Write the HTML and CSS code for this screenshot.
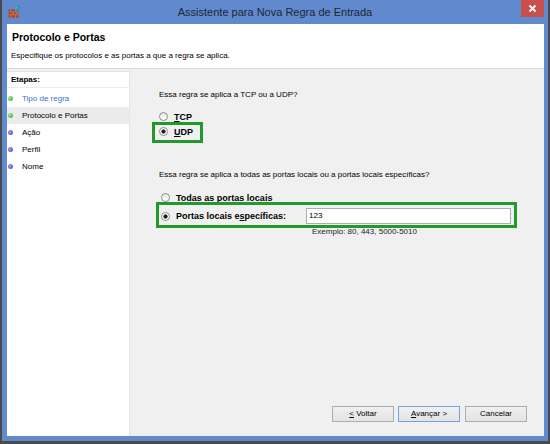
FILE: index.html
```html
<!DOCTYPE html>
<html lang="pt-BR">
  <head>
    <meta charset="UTF-8" />
    <title>Assistente para Nova Regra de Entrada</title>
    <link rel="stylesheet" href="styles.css">
  </head>
  <body>
    <div class="frame">
      <div class="titlebar">
        <svg class="app-icon" width="13" height="13" viewBox="0 0 13 13">
          <rect x="0.5" y="4.5" width="10" height="8" fill="#a4432b" />
          <path d="M0.5 7h10M0.5 9.7h10M3 4.5v2.5M7.5 4.5v2.5M5 7v2.7M9 7v2.7M3 9.7v2.8M7.5 9.7v2.8" stroke="#d9866a" stroke-width="0.7" fill="none" />
          <circle cx="9.3" cy="3.6" r="3" fill="#2f8fd8" />
          <path d="M7.4 2.4c1-.9 2-.6 2.6.2-.4.7-1.3.6-1.6 1.5-.5.4-1 .2-1.2-.4z" fill="#5cc24a" />
        </svg>
        <div class="title">Assistente para Nova Regra de Entrada</div>
        <div class="close">
          <svg width="9" height="9" viewBox="0 0 9 9">
            <path d="M1.5 1.5l6 6M7.5 1.5l-6 6" stroke="#fff" stroke-width="1.8" />
          </svg>
        </div>
      </div>

      <div class="content">
        <div class="header">
          <h1>Protocolo e Portas</h1>
          <p>Especifique os protocolos e as portas a que a regra se aplica.</p>
        </div>

        <div class="body">
          <div class="steps">
            <div class="steps-title">Etapas:</div>
            <ul class="step-list">
              <li class="step done"><span class="dot green"></span>Tipo de regra</li>
              <li class="step current"><span class="dot green"></span>Protocolo e Portas</li>
              <li class="step"><span class="dot"></span>Ação</li>
              <li class="step"><span class="dot"></span>Perfil</li>
              <li class="step"><span class="dot"></span>Nome</li>
            </ul>
          </div>

          <div class="main">
            <p class="question">Essa regra se aplica a TCP ou a UDP?</p>
            <div class="choices">
              <div class="choice"><span class="radio"></span><b><u>T</u>CP</b></div>
              <div class="choice marked udp"><span class="radio on"></span><b><u>U</u>DP</b></div>
            </div>

            <p class="question q2">Essa regra se aplica a todas as portas locais ou a portas locais específicas?</p>
            <div class="choices ports">
              <div class="choice"><span class="radio"></span><b>T<u>o</u>das as portas locais</b></div>
              <div class="choice marked specific">
                <span class="radio on"></span>
                <b class="port-label">Portas locais e<u>s</u>pecíficas:</b>
                <div class="port-input">123</div>
              </div>
              <div class="hint">Exemplo: 80, 443, 5000-5010</div>
            </div>

            <div class="buttons">
              <div class="btn"><u>&lt;</u> Voltar</div>
              <div class="btn default"><u>A</u>vançar &gt;</div>
              <div class="btn cancel">Cancelar</div>
            </div>
          </div>
        </div>
      </div>
    </div>
  </body>
</html>
```

FILE: styles.css
```css
* {
  margin: 0;
  padding: 0;
  box-sizing: border-box;
  font-family: "Liberation Sans", Arial, sans-serif;
}

body {
  width: 550px;
  height: 444px;
  background-color: #4a4a4a;
  padding: 0 2px 3px 2px;
  overflow: hidden;
}

.frame {
  height: 441px;
  background-color: #6189ce;
  display: flex;
  flex-direction: column;
}

.titlebar {
  height: 24px;
  display: flex;
  align-items: flex-start;
  padding: 0 4px 0 6px;
}

.app-icon {
  margin-top: 5px;
  flex-shrink: 0;
}

.title {
  flex: 1;
  text-align: center;
  font-size: 11px;
  line-height: 25px;
  color: #1f2630;
  padding-left: 8px;
}

.close {
  width: 23px;
  height: 17px;
  background-color: #c9504d;
  display: flex;
  align-items: center;
  justify-content: center;
}

.content {
  flex: 1;
  margin: 0 4px 5px 5px;
  background-color: #ffffff;
  display: flex;
  flex-direction: column;
}

.header {
  height: 45px;
  padding: 6px 0 0 4px;
  border-bottom: 1px solid #dadada;
}

.header h1 {
  font-size: 10.5px;
  line-height: 14px;
  padding-left: 1px;
  color: #000;
}

.header p {
  font-size: 8px;
  line-height: 10px;
  margin-top: 7px;
  color: #000;
}

.body {
  flex: 1;
  display: flex;
  background-color: #f0f0f0;
}

.steps {
  width: 123px;
  margin-top: 2px;
  background-color: #ffffff;
  border: 1px solid #e3e3e3;
  border-left: none;
  border-bottom: none;
}

.steps-title {
  height: 16px;
  line-height: 16px;
  padding-left: 4px;
  font-size: 8px;
  font-weight: bold;
  border-bottom: 1px solid #ededed;
}

.step-list {
  list-style: none;
  padding-top: 2px;
}

.step {
  height: 17px;
  display: flex;
  align-items: center;
  gap: 9px;
  padding-left: 1px;
  font-size: 8px;
  color: #000;
}

.step.done {
  color: #3b6fd0;
}

.step.current {
  background-color: #ebebeb;
}

.dot {
  width: 5px;
  height: 5px;
  border-radius: 50%;
  background: radial-gradient(circle at 35% 35%, #9c9cf0, #4646c4);
}

.dot.green {
  background: radial-gradient(circle at 35% 35%, #a6e58f, #3aa630);
}

.main {
  flex: 1;
  display: flex;
  flex-direction: column;
  padding: 21px 0 14px 29px;
}

.question {
  font-size: 8px;
  line-height: 10px;
  color: #000;
}

.q2 {
  margin-top: 31px;
}

.choices {
  margin-top: 9px;
}

.choices.ports {
  margin-top: 10px;
  padding-left: 2px;
}

.choice {
  height: 15px;
  display: flex;
  align-items: center;
  gap: 6px;
  font-size: 9px;
  color: #000;
}

.radio {
  width: 9px;
  height: 9px;
  border-radius: 50%;
  border: 1px solid #8e8e8e;
  background: linear-gradient(#e6e6e6, #ffffff);
  flex-shrink: 0;
}

.radio.on {
  background: radial-gradient(circle, #1e1e1e 0 1.8px, #ffffff 2.4px);
}

.marked {
  position: relative;
}

.marked::after {
  content: "";
  position: absolute;
  box-sizing: border-box;
  border: 3px solid #23992b;
}

.udp::after {
  left: -7px;
  top: -2px;
  width: 51px;
  height: 21px;
}

.specific {
  height: 16px;
  margin-top: 3px;
}

.specific::after {
  left: -5px;
  top: -6px;
  width: 361px;
  height: 26px;
}

.port-label {
  width: 124px;
  flex-shrink: 0;
}

.port-input {
  width: 205px;
  height: 16px;
  border: 1px solid #abadb3;
  background-color: #ffffff;
  font-size: 8px;
  line-height: 14px;
  padding-left: 2px;
  color: #000;
}

.hint {
  margin: 3px 0 0 151px;
  font-size: 8px;
  line-height: 10px;
  color: #222;
}

.buttons {
  margin-top: auto;
  display: flex;
  justify-content: flex-end;
  padding-right: 17px;
}

.btn {
  width: 62px;
  height: 16px;
  border: 1px solid #adadad;
  background: linear-gradient(#f0f0f0, #e3e3e3);
  font-size: 8px;
  line-height: 14px;
  text-align: center;
  color: #000;
}

.btn.default {
  margin-left: 4px;
  border-color: #6fa6e0;
}

.btn.cancel {
  margin-left: 5px;
}
```
